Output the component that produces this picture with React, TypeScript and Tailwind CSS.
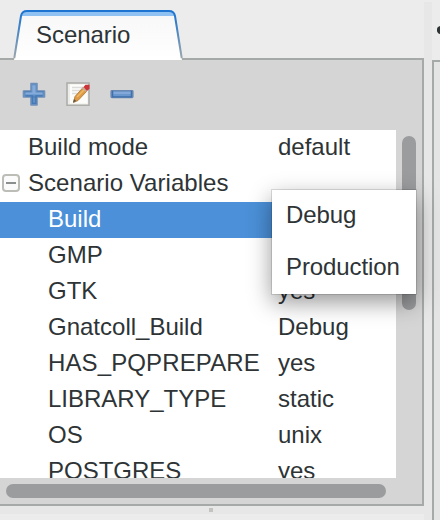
const rows = [
  { name: "Build mode", value: "default", kind: "top" },
  { name: "Scenario Variables", value: "", kind: "group" },
  { name: "Build", value: "", kind: "selected" },
  { name: "GMP", value: "", kind: "child" },
  { name: "GTK", value: "yes", kind: "child" },
  { name: "Gnatcoll_Build", value: "Debug", kind: "child" },
  { name: "HAS_PQPREPARE", value: "yes", kind: "wide" },
  { name: "LIBRARY_TYPE", value: "static", kind: "child" },
  { name: "OS", value: "unix", kind: "child" },
  { name: "POSTGRES", value: "yes", kind: "child" },
];

const nameStyles: Record<string, string> = {
  top: "w-[250px] shrink-0 whitespace-nowrap",
  group: "w-[250px] shrink-0 whitespace-nowrap tracking-[0.05px]",
  selected: "w-[250px] shrink-0 whitespace-nowrap pl-5",
  child: "w-[250px] shrink-0 whitespace-nowrap pl-5",
  wide: "w-[250px] shrink-0 whitespace-nowrap pl-5 tracking-[0.12px]",
};

function Tab() {
  return (
    <div className="relative h-[60px] shrink-0">
      <div className="absolute bottom-0 left-0 h-[2px] w-[424px] bg-[#a5a9a8]" />
      <svg className="absolute left-0 top-0" width="200" height="60" viewBox="0 0 200 60">
        <defs>
          <linearGradient id="edge" x1="0" y1="10" x2="0" y2="60" gradientUnits="userSpaceOnUse">
            <stop offset="0" stopColor="#1b74d2" />
            <stop offset="0.2" stopColor="#2d7bcb" />
            <stop offset="1" stopColor="#a0a8ab" />
          </linearGradient>
          <linearGradient id="fill" x1="0" y1="10" x2="0" y2="60" gradientUnits="userSpaceOnUse">
            <stop offset="0" stopColor="#f7f7f7" />
            <stop offset="1" stopColor="#ffffff" />
          </linearGradient>
          <clipPath id="tab">
            <path d="M14 60 L14.5 58 L21 16 Q22 11 27 11 H169 Q174 11 175 16 L181.5 58 L182 60 Z" />
          </clipPath>
        </defs>
        <g clipPath="url(#tab)">
          <rect width="200" height="60" fill="url(#fill)" />
          <rect y="11" width="200" height="5" fill="#8fc2f2" />
        </g>
        <path d="M14.3 58 L21 16 Q22 11 27 11 H169 Q174 11 175 16 L181.7 58" fill="none" stroke="url(#edge)" strokeWidth="2" />
      </svg>
      <span className="absolute left-[36px] top-[20px] leading-[30px] tracking-[-0.05px]">Scenario</span>
    </div>
  );
}

function Toolbar() {
  return (
    <div className="flex h-[70px] items-start gap-5 pl-[22px] pt-[22px]">
      <svg width="24" height="24" viewBox="0 0 24 24">
        <path d="M9 1.5h6v7.5h7.5v6H15v8H9v-8H1.5V9H9z" fill="#5f8fc6" stroke="#6f90b9" strokeWidth="1.6" strokeLinejoin="round" />
        <path d="M9 9.5H2.2M15 9.5h6.8M9 15h6" stroke="#4373ac" strokeWidth="1.4" opacity="0.45" />
        <path d="M10.3 3.2h3.2v7.2h7v2h-17v-2h6.8z" fill="#84abd9" />
        <path d="M3.4 13.8h7v7.6h3.5v-7.6h6.8" fill="none" stroke="#4679b5" strokeWidth="1.3" />
      </svg>
      <svg width="24" height="24" viewBox="0 0 24 24">
        <rect x="1" y="1" width="22" height="22.3" fill="#ecece8" stroke="#adaeaa" strokeWidth="1.6" />
        <rect x="4" y="2.5" width="17.5" height="19" fill="#fcfcfa" />
        <path d="M6 5.5h11M6 8.5h8M6 11.5h6" stroke="#dcdddb" strokeWidth="1.6" />
        <path d="M9 14.5l8-9 4 3.5-9 9.5-4.5 2z" fill="#df9a44" stroke="#a97433" strokeWidth="0.8" />
        <path d="M11 15l8-8" stroke="#f2b964" strokeWidth="1.5" />
        <path d="M17.5 5l2-2.2h4v4L21 9z" fill="#cc3238" />
        <path d="M16.2 5.8l4.4 3.7" stroke="#c3aba3" strokeWidth="1.4" />
        <path d="M7 20.5l1-3.4 2.2 2z" fill="#5e5540" />
      </svg>
      <svg width="24" height="24" viewBox="0 0 24 24">
        <rect x="1.2" y="8.8" width="21.6" height="6.6" rx="0.6" fill="#6a97cd" stroke="#6988b2" strokeWidth="1.6" />
        <rect x="3" y="9.8" width="18" height="2.2" fill="#82a9d9" />
        <path d="M2.6 8.8v6.4M21.4 8.8v6.4M2 14.8h20" stroke="#3e70ad" strokeWidth="1.3" />
      </svg>
    </div>
  );
}

function VariableTree() {
  return (
    <div className="h-[348px] w-[396px] overflow-hidden bg-white">
      {rows.map((row) => (
        <div
          key={row.name}
          className={
            row.kind === "selected"
              ? "flex h-9 bg-[#4b90d8] leading-[34px] text-white"
              : "flex h-9 leading-[34px]"
          }
        >
          <div className="flex w-[28px] shrink-0 pl-[2px] pt-[8px]">
            {row.kind === "group" && (
              <span className="flex size-[18px] items-center justify-center rounded-[4px] border-2 border-[#bdbdb7] bg-[#fbfbfb]">
                <span className="h-[2px] w-[10px] bg-[#8b8f8d]" />
              </span>
            )}
          </div>
          <div className={nameStyles[row.kind]}>{row.name}</div>
          <div>{row.value}</div>
        </div>
      ))}
    </div>
  );
}

export default function App() {
  return (
    <div className="relative flex h-[520px] w-[440px] overflow-hidden bg-[#ececec] font-['Liberation_Sans',Arial,sans-serif] text-[24px] text-[#2e3436]">
      <div className="flex w-[424px] shrink-0 flex-col">
        <Tab />
        <div className="h-[446px] shrink-0 border-b-2 border-r-2 border-[#a5a9a8] bg-[#d5d5d5]">
          <Toolbar />
          <div className="flex">
            <VariableTree />
            <div className="pl-[6px] pt-[6px]">
              <div className="h-[174px] w-[14px] rounded-full bg-[#9b9c9e]" />
            </div>
          </div>
          <div className="pl-[6px] pt-[6px]">
            <div className="h-[14px] w-[380px] rounded-full bg-[#9b9c9e]" />
          </div>
        </div>
        <div className="flex h-[8px] shrink-0 items-center bg-[#e7e7e7] pl-[209px]">
          <div className="size-[4px] bg-[#c3c4c2]" />
        </div>
      </div>
      <div className="mt-[2px] w-[8px] shrink-0 bg-[#e7e7e7]" />
      <div className="flex w-[8px] shrink-0 flex-col overflow-hidden">
        <div className="h-[60px] shrink-0 pl-[5px] pt-[22px]">
          <svg width="3" height="16" viewBox="0 0 3 16">
            <circle cx="4" cy="8" r="4.2" fill="#2e3436" />
          </svg>
        </div>
        <div className="grow border-l-2 border-t-2 border-[#a5a9a8] bg-[#e4e4e4]" />
      </div>

      <div className="absolute left-[272px] top-[190px] h-[104px] w-[144px] bg-white shadow-[0_0_0_1px_rgba(0,0,0,0.12),0_8px_22px_rgba(0,0,0,0.42)]">
        <div className="h-[52px] pl-[14px] leading-[50px] tracking-[-0.1px]">Debug</div>
        <div className="h-[52px] pl-[14px] leading-[50px] tracking-[-0.1px]">Production</div>
      </div>
    </div>
  );
}
